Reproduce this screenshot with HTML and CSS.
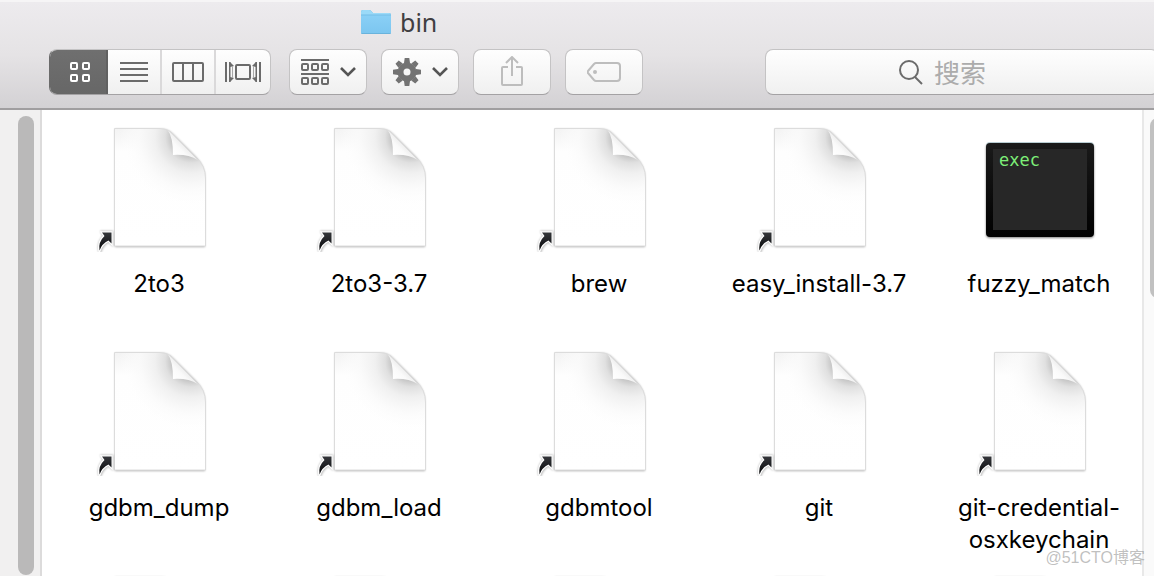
FILE: index.html
```html
<!DOCTYPE html>
<html lang="zh-CN">
<head>
<meta charset="utf-8">
<title>bin</title>
<link rel="stylesheet" href="styles.css">
</head>
<body>
<svg class="defs" width="0" height="0" aria-hidden="true">
  <defs>
    <linearGradient id="page-top" x1="0" y1="0" x2="0" y2="1">
      <stop offset="0" stop-color="#f3f3f3"/><stop offset=".2" stop-color="#fefefe"/><stop offset="1" stop-color="#fff"/>
    </linearGradient>
    <radialGradient id="page-shade" gradientUnits="userSpaceOnUse" cx="96" cy="13" r="72">
      <stop offset="0" stop-color="#bbb"/><stop offset=".27" stop-color="#c6c6c6"/><stop offset=".36" stop-color="#e0e0e0"/><stop offset=".5" stop-color="#f0f0f0"/><stop offset=".72" stop-color="#fafafa" stop-opacity=".8"/><stop offset="1" stop-color="#fff" stop-opacity="0"/>
    </radialGradient>
    <linearGradient id="curl" gradientUnits="userSpaceOnUse" x1="78" y1="31" x2="89" y2="20">
      <stop offset="0" stop-color="#fff"/><stop offset=".6" stop-color="#fafafa"/><stop offset="1" stop-color="#ececec"/>
    </linearGradient>
    <linearGradient id="arrow-fill" x1="0" y1="0" x2="0" y2="1">
      <stop offset="0" stop-color="#34363a"/><stop offset="1" stop-color="#08090b"/>
    </linearGradient>
    <linearGradient id="bezel" x1="0" y1="0" x2="0" y2="1">
      <stop offset="0" stop-color="#1a1a1a"/><stop offset="1" stop-color="#000"/>
    </linearGradient>
    <linearGradient id="folder-front" x1="0" y1="0" x2="0" y2="1">
      <stop offset="0" stop-color="#8ad0f6"/><stop offset="1" stop-color="#7cc6f0"/>
    </linearGradient>
    <filter id="soft" x="-20%" y="-20%" width="140%" height="140%"><feGaussianBlur stdDeviation="1"/></filter>
    <symbol id="file" viewBox="0 0 128 128">
      <path d="M20 5H66Q73 5 78 10L101 33Q110 42 110 54V123H20Z" fill="#000" opacity=".32" filter="url(#soft)"/>
      <path d="M19.500 4.500H65Q72 4.500 77 9L101 33Q110.500 42 110.500 54V122H19.500Z" fill="url(#page-top)"/>
      <path d="M19.500 4.500H65Q72 4.500 77 9L101 33Q110.500 42 110.500 54V122H19.500Z" fill="url(#page-shade)"/>
      <path d="M19.500 4.500H65Q72 4.500 77 9L101 33Q110.500 42 110.500 54V122H19.500Z" fill="none" stroke="#dcdcdc"/>
      <path d="M73 6.500Q78 13 78 31Q93 30 103 36L77 9Z" fill="url(#curl)"/>
      <path d="M75 7.500L103 35.500" fill="none" stroke="#d2d2d2"/>
    </symbol>
    <symbol id="alias" viewBox="0 0 128 128">
      <path d="M7 108H17V120L14 117Q7 121 5 128Q2 120 9 112Z" fill="#000" stroke="#000" stroke-width="2.500" opacity=".28" filter="url(#soft)"/>
      <path d="M7 108.500H16.500V119.500L13.500 116.500Q7 119.500 4.500 126.500Q3 118 9.500 112Z" fill="url(#arrow-fill)" stroke="#fff" stroke-width="2.400" paint-order="stroke"/>
    </symbol>
  </defs>
</svg>

<div class="window">
  <header class="toolbar">
    <h1 class="title">
      <svg width="32" height="26" viewBox="0 0 32 26" aria-hidden="true">
        <path d="M1 3Q1 1 3 1H9Q11 1 12 3L13 4H29Q31 4 31 6V24Q31 25 30 25H2Q1 25 1 24Z" fill="#69b3dc"/>
        <path d="M1 3Q1 1 3 1H9Q11 1 12 3L13 4H29Q31 4 31 6V8H1Z" fill="#9bdaf8"/>
        <rect x="1" y="6" width="30" height="18" fill="url(#folder-front)"/>
        <path d="M1 6H31" stroke="#74bde6"/>
      </svg>
      <span>bin</span>
    </h1>
    <div class="controls">
      <div class="segments">
        <button class="segment active" type="button" aria-label="Icons">
          <svg width="22" height="22" viewBox="0 0 22 22" fill="none" stroke="#fff" stroke-width="2">
            <rect x="2" y="2" width="6" height="6" rx="1"/><rect x="14" y="2" width="6" height="6" rx="1"/><rect x="2" y="14" width="6" height="6" rx="1"/><rect x="14" y="14" width="6" height="6" rx="1"/>
          </svg>
        </button>
        <button class="segment" type="button" aria-label="List">
          <svg width="28" height="22" viewBox="0 0 28 22" stroke="#6b6b6b" stroke-width="2"><path d="M0 2H28M0 8H28M0 14H28M0 20H28"/></svg>
        </button>
        <button class="segment" type="button" aria-label="Columns">
          <svg width="32" height="22" viewBox="0 0 32 22" fill="none" stroke="#6b6b6b" stroke-width="2"><rect x="1" y="2" width="30" height="18" rx="1"/><path d="M11 2V20M21 2V20"/></svg>
        </button>
        <button class="segment" type="button" aria-label="Gallery">
          <svg width="36" height="22" viewBox="0 0 36 22" fill="none" stroke="#6b6b6b" stroke-width="2"><rect x="11" y="4" width="14" height="14" rx="1"/><path d="M1 1V21M35 1V21"/><path stroke-width="1.500" d="M4.750 1V21M31.250 1V21"/><path fill="#6b6b6b" stroke="none" d="M5 1L9 5L5 6ZM5 21L9 17L5 16ZM31 1L27 5L31 6ZM31 21L27 17L31 16Z"/><path stroke="#a8a8a8" stroke-width="1" d="M7.500 5V17M28.500 5V17"/></svg>
        </button>
      </div>
      <div class="actions">
        <button class="button" type="button" aria-label="Arrange">
          <svg width="28" height="28" viewBox="0 0 28 28" fill="none" stroke="#6b6b6b" stroke-width="2"><path d="M0 2H28M0 16H28"/><rect x="1" y="6" width="6" height="6" rx="1"/><rect x="11" y="6" width="6" height="6" rx="1"/><rect x="21" y="6" width="6" height="6" rx="1"/><rect x="1" y="20" width="6" height="6" rx="1"/><rect x="11" y="20" width="6" height="6" rx="1"/><rect x="21" y="20" width="6" height="6" rx="1"/></svg>
          <svg width="16" height="12" viewBox="0 0 16 12" fill="none" stroke="#555" stroke-width="2.600"><path d="M1 2L8 9L15 2"/></svg>
        </button>
        <button class="button" type="button" aria-label="Action">
          <svg width="28" height="28" viewBox="-14 -14 28 28" fill="#737373">
            <circle r="6.500" fill="none" stroke="#737373" stroke-width="6"/>
            <path id="teeth" d="M-3 -9L-2.300 -14H2.300L3 -9ZM-3 9L-2.300 14H2.300L3 9ZM-9 -3L-14 -2.300V2.300L-9 3ZM9 -3L14 -2.300V2.300L9 3Z"/>
            <use href="#teeth" transform="rotate(45)"/>
          </svg>
          <svg width="16" height="12" viewBox="0 0 16 12" fill="none" stroke="#555" stroke-width="2.600"><path d="M1 2L8 9L15 2"/></svg>
        </button>
        <button class="button" type="button" aria-label="Share" disabled>
          <svg width="24" height="32" viewBox="0 0 24 32" fill="none" stroke="#bdbdbd" stroke-width="2"><path d="M8 11H3Q2 11 2 12V28Q2 29 3 29H21Q22 29 22 28V12Q22 11 21 11H16M12 20V1M6 7L12 1L18 7"/></svg>
        </button>
        <button class="button" type="button" aria-label="Tags" disabled>
          <svg width="34" height="22" viewBox="0 0 34 22" fill="none" stroke="#bdbdbd" stroke-width="2"><path d="M9 2H30Q33 2 33 5V17Q33 20 30 20H9Q8 20 7 19L1 12Q0 11 1 10L7 3Q8 2 9 2Z"/><circle cx="8" cy="11" r="2" fill="#bdbdbd" stroke="none"/></svg>
        </button>
      </div>
      <label class="search">
        <svg width="26" height="26" viewBox="0 0 26 26" fill="none" stroke="#6b6b6b" stroke-width="2"><circle cx="11" cy="11" r="9"/><path d="M17 18L24 25"/></svg>
        <input type="search" placeholder="搜索" aria-label="搜索">
      </label>
    </div>
  </header>

  <div class="body">
    <aside class="sidebar"><div class="thumb"></div></aside>
    <main class="files">
      <figure class="item"><svg class="icon"><use href="#file"/><use href="#alias"/></svg><figcaption>2to3</figcaption></figure>
      <figure class="item"><svg class="icon"><use href="#file"/><use href="#alias"/></svg><figcaption>2to3-3.7</figcaption></figure>
      <figure class="item"><svg class="icon"><use href="#file"/><use href="#alias"/></svg><figcaption>brew</figcaption></figure>
      <figure class="item"><svg class="icon"><use href="#file"/><use href="#alias"/></svg><figcaption>easy_install-3.7</figcaption></figure>
      <figure class="item">
        <svg class="icon" viewBox="0 0 128 128">
          <rect x="11" y="20" width="108" height="94" rx="4" opacity=".5" filter="url(#soft)"/>
          <rect x="11" y="18" width="108" height="94" rx="4" fill="#b9cdd3"/>
          <rect x="11" y="19" width="108" height="94" rx="4" fill="url(#bezel)"/>
          <rect x="18" y="25" width="94" height="81" fill="#272727"/>
          <text class="exec" x="24" y="42">exec</text>
        </svg>
        <figcaption>fuzzy_match</figcaption>
      </figure>
      <figure class="item"><svg class="icon"><use href="#file"/><use href="#alias"/></svg><figcaption>gdbm_dump</figcaption></figure>
      <figure class="item"><svg class="icon"><use href="#file"/><use href="#alias"/></svg><figcaption>gdbm_load</figcaption></figure>
      <figure class="item"><svg class="icon"><use href="#file"/><use href="#alias"/></svg><figcaption>gdbmtool</figcaption></figure>
      <figure class="item"><svg class="icon"><use href="#file"/><use href="#alias"/></svg><figcaption>git</figcaption></figure>
      <figure class="item"><svg class="icon"><use href="#file"/><use href="#alias"/></svg><figcaption>git-credential-osxkeychain</figcaption></figure>
      <figure class="item"><svg class="icon"><use href="#file"/></svg></figure>
      <figure class="item"><svg class="icon"><use href="#file"/></svg></figure>
      <figure class="item"><svg class="icon"><use href="#file"/></svg></figure>
      <figure class="item"><svg class="icon"><use href="#file"/></svg></figure>
      <figure class="item"><svg class="icon"><use href="#file"/></svg></figure>
    </main>
    <div class="scroller"><div class="thumb"></div></div>
  </div>
  <span class="watermark">@51CTO博客</span>
</div>
</body>
</html>
```
FILE: styles.css
```css
* {
  box-sizing: border-box;
}

body {
  margin: 0;
  font-family: Inter, "Noto Sans CJK SC", sans-serif;
  color: #000;
}

.defs {
  position: absolute;
}

.window {
  position: relative;
  display: flex;
  flex-direction: column;
  height: 100vh;
  overflow: hidden;
  background: #fff;
}

.toolbar {
  flex: none;
  height: 110px;
  border-top: 2px solid #f6f5f6;
  border-bottom: 2px solid #a09ea0;
  background: linear-gradient(#edebee, #e5e3e5 50%, #d3d1d4);
}

.title {
  display: flex;
  align-items: center;
  gap: 8px;
  height: 47px;
  margin: 0;
  padding: 0 0 8px 360px;
  font-family: "Noto Sans", sans-serif;
  font-size: 25px;
  line-height: 32px;
  font-weight: 400;
  color: #403e41;
}

.controls {
  display: flex;
  height: 46px;
  padding-left: 49px;
  overflow: hidden;
}

.segments,
.button,
.search {
  border: 1px solid #c4c3c4;
  border-bottom-color: #a4a2a4;
  border-radius: 8px;
  background: linear-gradient(#fefefe, #f0f0f0);
}

.segments {
  display: grid;
  grid-template-columns: 58px 54px 54px 54px;
  margin-right: 18px;
  overflow: hidden;
}

.segment {
  display: flex;
  align-items: center;
  justify-content: center;
  padding: 0;
  border: 0;
  border-right: 2px solid #dad9da;
  background: none;
}

.segment:last-child {
  border-right: 0;
}

.segment.active {
  padding-left: 4px;
  border-right-color: #616161;
  background: linear-gradient(#6f6f6f, #676767);
}

.segments:has(.active:first-child) {
  border-left-color: #6b6b6b;
}

.actions {
  display: flex;
  gap: 14px;
  margin-right: 122px;
}

.button {
  display: flex;
  align-items: center;
  justify-content: center;
  gap: 11px;
  width: 78px;
  padding: 0;
}

.search {
  display: flex;
  flex: 1;
  align-items: center;
  justify-content: center;
  gap: 10px;
  margin-right: -5px;
}

.search input {
  width: 92px;
  padding: 0;
  border: 0;
  outline: 0;
  background: none;
  font: 26px/36px "Noto Sans CJK SC", sans-serif;
  color: #333;
}

.search input::placeholder {
  color: #acacac;
}

.body {
  display: flex;
  flex: 1;
  min-height: 0;
}

.sidebar {
  flex: none;
  width: 42px;
  padding: 6px 6px 1px 18px;
  border-right: 2px solid #dcdbdb;
  background: #f1f0f0;
}

.thumb {
  width: 16px;
  height: 100%;
  border-radius: 8px;
  background: #bab9b9;
}

.files {
  display: grid;
  flex: 1;
  grid-template-columns: repeat(auto-fill, 200px);
  grid-auto-rows: 224px;
  column-gap: 20px;
  padding: 14px 0 0 17px;
  overflow: hidden;
}

.item {
  display: flex;
  flex-direction: column;
  align-items: center;
  gap: 16px;
  margin: 0;
}

.icon {
  width: 128px;
  height: 128px;
  overflow: visible;
}

.item figcaption {
  max-width: 180px;
  font-size: 24px;
  line-height: 32px;
  text-align: center;
}

.exec {
  font: 17px "DejaVu Sans Mono", monospace;
  fill: #7dee78;
}

.scroller {
  flex: none;
  width: 12px;
  padding: 8px 0 0 6px;
  border-left: 2px solid #e8e8e8;
  background: #fafafa;
  overflow: hidden;
}

.scroller .thumb {
  height: 180px;
  background: #c1c1c1;
}

.watermark {
  position: absolute;
  right: 9px;
  bottom: 6px;
  font: 16px/24px "Liberation Sans", "Noto Sans CJK SC", sans-serif;
  color: rgba(150, 150, 150, 0.6);
}
```
